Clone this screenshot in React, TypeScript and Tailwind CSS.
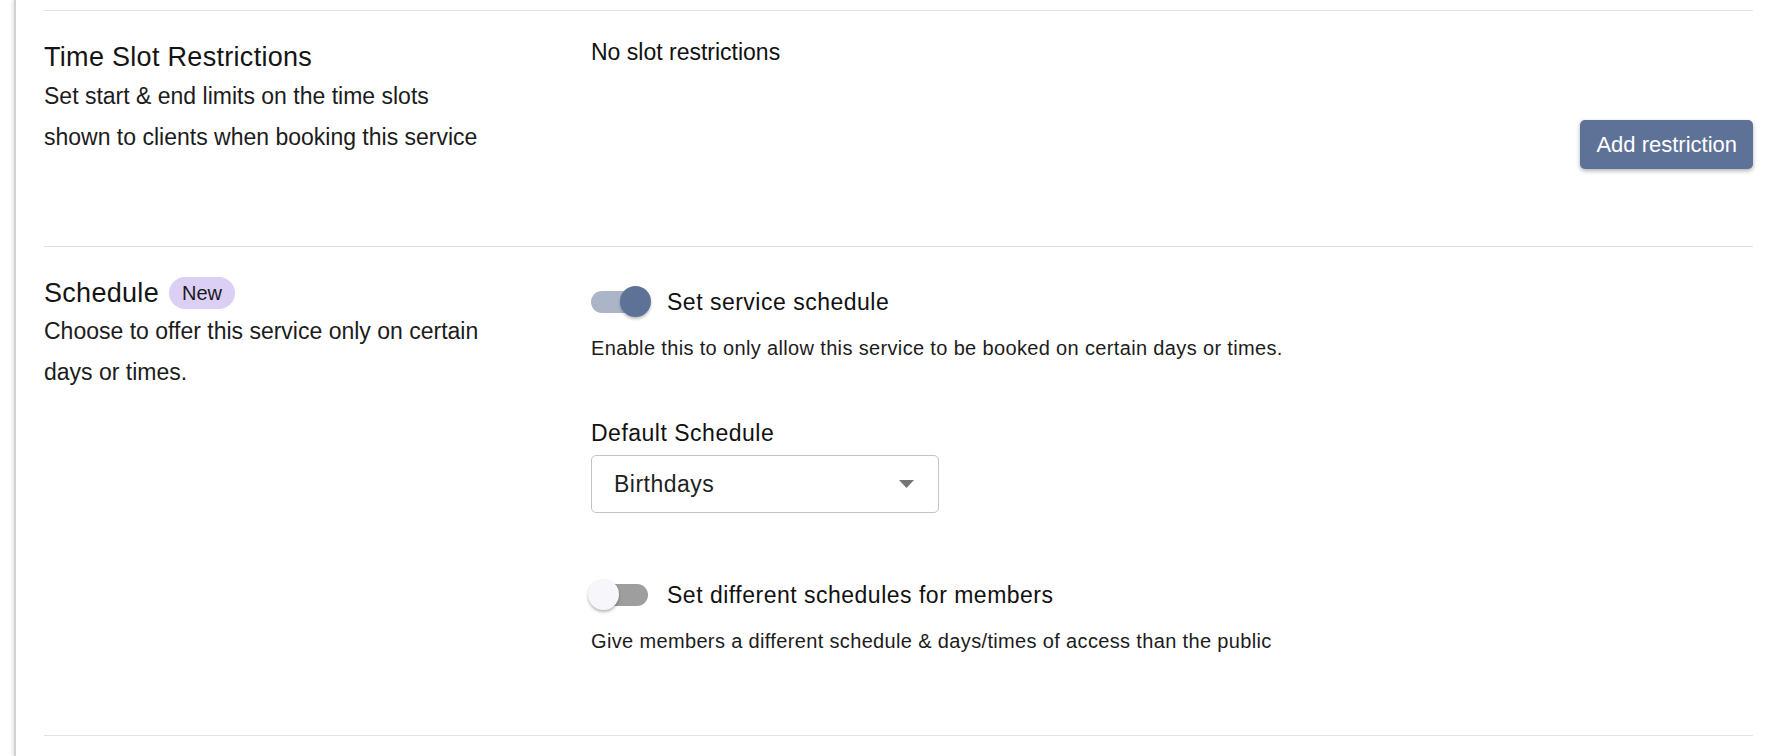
import React from 'react';

function Toggle({ on }: { on: boolean }) {
  return (
    <div className="relative h-[32px] w-[57px] shrink-0">
      <div
        className={
          on
            ? 'absolute inset-x-0 top-[5px] h-[22px] rounded-full bg-[#abb5c7]'
            : 'absolute inset-x-0 top-[5px] h-[22px] rounded-full bg-[#9e9e9e]'
        }
      />
      <div
        className={
          on
            ? 'absolute left-[29px] top-0 h-[31px] w-[31px] rounded-full bg-[#5e7297] shadow-[0_2px_3px_rgba(0,0,0,0.25)]'
            : 'absolute left-[-3px] top-0 h-[31px] w-[31px] rounded-full bg-[#f7f7fb] shadow-[0_2px_3px_rgba(0,0,0,0.28)]'
        }
      />
    </div>
  );
}

export default function App() {
  return (
    <div className="min-h-screen bg-white pl-[14px] font-['Liberation_Sans',Arial,sans-serif] text-[#1c1c1c]">
      <div className="min-h-screen border-l-2 border-[#d2d2d2] pl-[28px] pr-[25px] pt-[10px] shadow-[-1px_0_4px_rgba(0,0,0,0.15)]">
        {/* time slot restrictions */}
        <section className="flex border-t border-[#e3e3e3]">
          <div className="w-[547px] shrink-0 pt-[30px]">
            <h2 className="text-[27px] leading-[32px] tracking-[0.3px] text-[#141414]">Time Slot Restrictions</h2>
            <p className="mt-[3px] w-[445px] text-[23px] leading-[41px]">
              Set start &amp; end limits on the time slots shown to clients when booking this service
            </p>
          </div>
          <div className="flex flex-1 flex-col pb-[77px] pt-[27px]">
            <p className="text-[23px] leading-[28px] text-[#111]">No slot restrictions</p>
            <div className="mt-[54px] flex justify-end">
              <button className="h-[49px] rounded-[5px] bg-[#5e7297] px-[16px] text-[22px] text-white shadow-[0_2px_4px_rgba(0,0,0,0.3)]">
                Add restriction
              </button>
            </div>
          </div>
        </section>

        {/* schedule */}
        <section className="flex border-y border-[#e3e3e3]">
          <div className="w-[547px] shrink-0 pt-[30px]">
            <div className="flex h-[32px] items-center">
              <h2 className="text-[27px] leading-[32px] tracking-[0.3px] text-[#141414]">Schedule</h2>
              <span className="ml-[10px] flex h-[32px] items-center rounded-full bg-[#dccff6] px-[13px] text-[20px] text-[#1a1a1a]">
                New
              </span>
            </div>
            <p className="mt-[2px] w-[445px] text-[23px] leading-[41px]">
              Choose to offer this service only on certain days or times.
            </p>
          </div>
          <div className="flex flex-1 flex-col pb-[79px] pt-[39px]">
            <div className="flex items-center">
              <Toggle on />
              <span className="ml-[19px] text-[23px] leading-[32px] tracking-[0.5px] text-[#111]">Set service schedule</span>
            </div>
            <p className="mt-[15px] text-[20px] leading-[30px] tracking-[0.35px]">
              Enable this to only allow this service to be booked on certain days or times.
            </p>

            <label className="mt-[55px] text-[23px] leading-[30px] tracking-[0.5px] text-[#111]">Default Schedule</label>
            <div className="mt-[7px] flex h-[58px] w-[348px] items-center justify-between rounded-[5px] border border-[#c4c4c4] pl-[22px] pr-[24px]">
              <span className="text-[23px] tracking-[0.5px] text-[#1f1f1f]">Birthdays</span>
              <svg width="15" height="8" viewBox="0 0 15 8">
                <path d="M0 0h15L7.5 8z" fill="#757575" />
              </svg>
            </div>

            <div className="mt-[66px] flex items-center">
              <Toggle on={false} />
              <span className="ml-[19px] text-[23px] leading-[32px] tracking-[0.5px] text-[#111]">
                Set different schedules for members
              </span>
            </div>
            <p className="mt-[15px] text-[20px] leading-[30px] tracking-[0.35px]">
              Give members a different schedule &amp; days/times of access than the public
            </p>
          </div>
        </section>
      </div>
    </div>
  );
}
